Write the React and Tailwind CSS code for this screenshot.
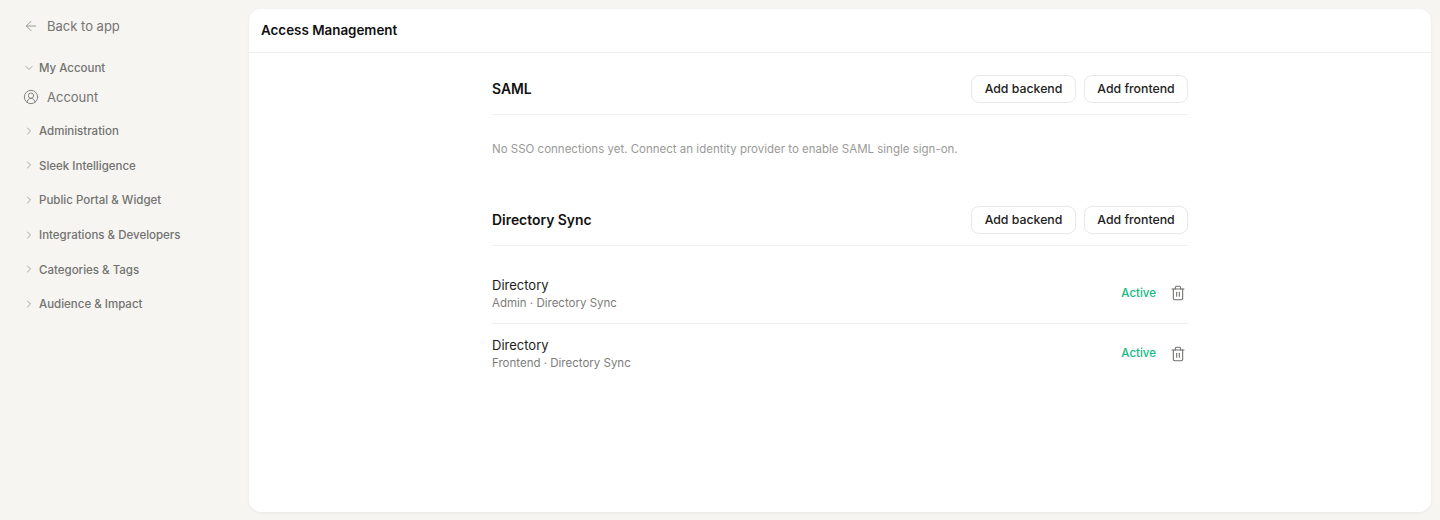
import React from 'react';
import { ArrowLeft, ChevronDown, ChevronRight, CircleUserRound, Trash2 } from 'lucide-react';

const groups = [
  'Administration',
  'Sleek Intelligence',
  'Public Portal & Widget',
  'Integrations & Developers',
  'Categories & Tags',
  'Audience & Impact'
];

const directories = [
  { id: 1, sub: 'Admin · Directory Sync' },
  { id: 2, sub: 'Frontend · Directory Sync' }
];

function SectionHeader({ title }) {
  return (
    <div className="flex items-start justify-between border-b border-[#efefee] pb-[11px]">
      <h2 className="text-[13.9px] leading-[28px] font-semibold text-[#111]">{title}</h2>
      <div className="flex gap-2">
        <button className="h-[28px] w-[105px] rounded-lg border border-[#e8e8e6] bg-white text-[12.3px] font-medium text-[#222]">Add backend</button>
        <button className="h-[28px] w-[104px] rounded-lg border border-[#e8e8e6] bg-white text-[12.3px] font-medium text-[#222]">Add frontend</button>
      </div>
    </div>
  );
}

export default function App() {
  return (
    <div className="flex h-[520px] bg-[#f6f5f2] font-['Inter',sans-serif] antialiased overflow-hidden">
      <aside className="w-[249px] shrink-0 pl-[24px]">
        <div className="flex items-center h-[20px] mt-[17px] text-[13px] text-[#747471]">
          <ArrowLeft size={16} strokeWidth={1.5} className="-ml-px -translate-y-px text-[#9a9a97]" />
          <span className="ml-[8px]">Back to app</span>
        </div>
        <div className="flex items-center h-[16px] mt-[24px] text-[11.5px] font-medium text-[#72726f]">
          <ChevronDown size={12} strokeWidth={1.5} className="-ml-px -translate-y-px text-[#8a8a87]" />
          <span className="ml-[4px]">My Account</span>
        </div>
        <div className="flex items-center h-[20px] mt-[11px] text-[13px] text-[#747471]">
          <CircleUserRound size={16} strokeWidth={1.5} className="-ml-px -translate-y-px text-[#858582]" />
          <span className="ml-[8px]">Account</span>
        </div>
        <ul className="mt-[6.6px]">
          {groups.map(g => (
            <li key={g} className="flex items-center h-[34.6px] text-[11.5px] font-medium text-[#72726f]">
              <ChevronRight size={12} strokeWidth={1.5} className="-ml-px -translate-y-px text-[#8a8a87]" />
              <span className="ml-[4px]">{g}</span>
            </li>
          ))}
        </ul>
      </aside>
      <main className="flex-1 mt-[9px] mb-[8px] mr-[9px] rounded-xl bg-white shadow-[0_1px_3px_rgba(0,0,0,0.06)]">
        <div className="flex items-center h-[44px] px-[12px] border-b border-[#efefee]">
          <h1 className="text-[13.4px] font-semibold text-[#111]">Access Management</h1>
        </div>
        <div className="w-[696px] ml-[243px] pt-[22.4px]">
          <SectionHeader title="SAML" />
          <p className="mt-[26px] text-[11.5px] leading-[17px] text-[#9a9a97]">No SSO connections yet. Connect an identity provider to enable SAML single sign-on.</p>
          <div className="mt-[47.6px]">
            <SectionHeader title="Directory Sync" />
          </div>
          <ul className="mt-[18px]">
            {directories.map((d, i) => (
              <li key={d.id} className={'flex justify-between h-[60px] ' + (i === 0 ? 'border-b border-[#efefee]' : '')}>
                <div className="mt-[12px]">
                  <div className="text-[13px] leading-[18px] text-[#1c1c1c]">Directory</div>
                  <div className="mt-px text-[11.5px] leading-[16px] text-[#7d7d7a]">{d.sub}</div>
                </div>
                <div className="flex items-center">
                  <span className="text-[11.5px] font-medium text-[#12b981]">Active</span>
                  <Trash2 size={16} strokeWidth={1.6} className="ml-[14px] mr-[2px] text-[#6f6f6c]" />
                </div>
              </li>
            ))}
          </ul>
        </div>
      </main>
    </div>
  );
}
